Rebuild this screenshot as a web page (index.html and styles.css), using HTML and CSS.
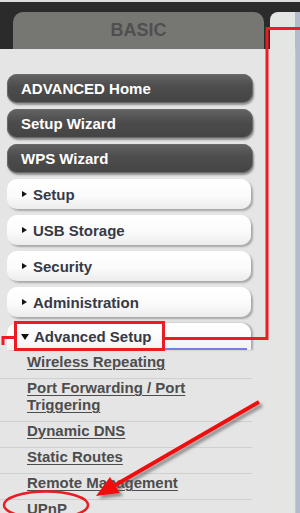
FILE: index.html
```html
<!DOCTYPE html>
<html>
<head>
<meta charset="utf-8">
<link rel="stylesheet" href="styles.css">
</head>
<body>
<div class="page">
  <div class="top">
    <div class="tab-basic">BASIC</div>
    <div class="tab-adv"></div>
    <div class="strip"></div>
  </div>
  <div class="main">
    <nav class="menu">
      <a class="btn dark">ADVANCED Home</a>
      <a class="btn dark">Setup Wizard</a>
      <a class="btn dark">WPS Wizard</a>
      <a class="btn light"><span class="tri"></span>Setup</a>
      <a class="btn light"><span class="tri"></span>USB Storage</a>
      <a class="btn light"><span class="tri"></span>Security</a>
      <a class="btn light"><span class="tri"></span>Administration</a>
      <a class="btn light open"><span class="tri down"></span>Advanced Setup</a>
      <ul class="sub">
        <li><a>Wireless Repeating</a></li>
        <li><a>Port Forwarding / Port Triggering</a></li>
        <li><a>Dynamic DNS</a></li>
        <li><a>Static Routes</a></li>
        <li><a>Remote Management</a></li>
        <li><a>UPnP</a></li>
      </ul>
    </nav>
    <div class="side"></div>
    <div class="strip lower"></div>
  </div>
  <svg class="annot" width="300" height="513" viewBox="0 0 300 513">
    <defs>
      <filter id="sh" x="-20%" y="-20%" width="140%" height="140%">
        <feDropShadow dx="3" dy="3" stdDeviation="1.5" flood-color="#555" flood-opacity="0.6"/>
      </filter>
    </defs>
    <path d="M300 28.5 H267 V338.5 H164" fill="none" stroke="#ec1c24" stroke-width="3"/>
    <rect x="15.5" y="322.5" width="148" height="27" fill="none" stroke="#ec1c24" stroke-width="3"/>
    <path d="M3 345 V337.5 H15" fill="none" stroke="#ec1c24" stroke-width="3"/>
    <g filter="url(#sh)">
      <line x1="259" y1="402" x2="112" y2="487" stroke="#f01010" stroke-width="4"/>
      <polygon points="96,496 110,477 120,493" fill="#f01010"/>
    </g>
    <ellipse cx="46" cy="505" rx="42" ry="13.5" fill="none" stroke="#ec1c24" stroke-width="2.5"/>
  </svg>
</div>
</body>
</html>
```

FILE: styles.css
```css
html, body {
  margin: 0;
  padding: 0;
}

body {
  width: 300px;
  height: 513px;
  overflow: hidden;
  background: #e5e5e5;
  font-family: "Liberation Sans", Arial, sans-serif;
}

.page {
  position: relative;
  width: 300px;
  height: 513px;
  overflow: hidden;
}

.top {
  display: flex;
  height: 37px;
  padding-top: 10px;
  border-top: 2px solid #dedede;
  background: #2b2b2b;
}

.tab-basic {
  margin-left: 13px;
  width: 251px;
  height: 37px;
  background: #767773;
  border-radius: 10px 10px 0 0;
  color: #4f4f4f;
  font-weight: bold;
  font-size: 18px;
  line-height: 36px;
  text-align: center;
}

.tab-adv {
  margin-left: 6px;
  flex: 1;
  background: #e4e6e3;
  border-radius: 8px 0 0 0;
}

.strip {
  width: 5px;
  background: #b3bccb;
}

.main {
  display: flex;
  height: 464px;
}

.menu {
  width: 265px;
  padding-top: 25px;
  display: flex;
  flex-direction: column;
}

.menu > * {
  flex-shrink: 0;
}

.side {
  flex: 1;
  background: #e5e6e4;
}

.strip.lower {
  box-shadow: inset 1px 0 0 #c4c8cf;
}

.btn {
  display: flex;
  align-items: center;
  margin-left: 7px;
  width: 246px;
  box-sizing: border-box;
  font-weight: bold;
  font-size: 15px;
  border-radius: 10px;
  text-decoration: none;
}

.btn.dark {
  height: 29px;
  margin-bottom: 6px;
  padding-left: 14px;
  color: #ffffff;
  background: linear-gradient(#646464, #4c4c4c 45%, #444444);
  box-shadow: 1px 2px 2px #8e8e8e, inset 0 0 0 1px #6a6a6a;
}

.btn.light {
  height: 30px;
  margin-bottom: 6px;
  padding-left: 15px;
  color: #363947;
  background: linear-gradient(#ffffff, #fbfbfb 55%, #ececec);
  box-shadow: 2px 2px 2px #a8a8a8;
  width: 244px;
}

.btn.open {
  height: 27px;
  margin-bottom: 0;
  border-radius: 10px 10px 0 0;
  box-shadow: 2px 0 2px #a8a8a8;
  background:
    linear-gradient(#7b7be6, #7b7be6) 46px 100% / 194px 2px no-repeat,
    linear-gradient(#ffffff, #fbfbfb 55%, #f1f1f1);
}

.tri {
  width: 0;
  height: 0;
  margin-right: 6px;
  border-left: 5px solid #111;
  border-top: 3.5px solid transparent;
  border-bottom: 3.5px solid transparent;
}

.tri.down {
  margin-left: -1px;
  margin-right: 5px;
  border-left: 4px solid transparent;
  border-right: 4px solid transparent;
  border-top: 6px solid #111;
  border-bottom: 0;
}

.sub {
  list-style: none;
  margin: 0;
  padding: 0;
  width: 252px;
}

.sub li {
  border-top: 1px solid #cfcfcf;
  padding: 0 20px 8px 27px;
  line-height: 17px;
  font-size: 15px;
  font-weight: bold;
}

.sub li:first-child {
  border-top: 0;
  padding-top: 3px;
}

.sub a {
  color: #4d4d4d;
  text-decoration: underline;
  text-decoration-thickness: 1px;
  text-underline-offset: 2px;
}

.annot {
  position: absolute;
  left: 0;
  top: 0;
  pointer-events: none;
}
```
